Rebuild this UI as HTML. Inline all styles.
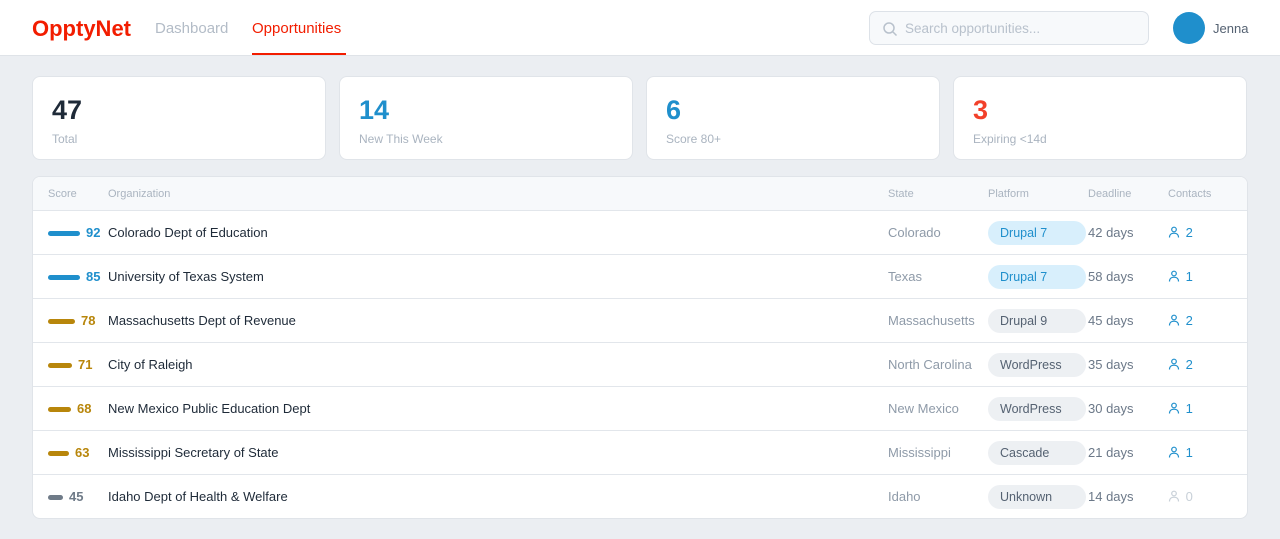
<!DOCTYPE html>
<html><head><meta charset="utf-8"><style>
*{box-sizing:border-box;margin:0;padding:0}
body{width:1280px;height:539px;background:#ebeef2;font-family:"Liberation Sans",sans-serif;position:relative;overflow:hidden}
.hdr{position:absolute;left:0;top:0;width:1280px;height:56px;background:#fff;border-bottom:1px solid #dfe3e8}
.logo{position:absolute;left:32px;top:16px;font-size:22px;font-weight:bold;color:#f21d00}
.nav{position:absolute;top:20px;font-size:15px}
.search{position:absolute;left:869px;top:11px;width:280px;height:34px;border:1px solid #dde2e8;border-radius:7px;background:#f7f9fb}
.search span{position:absolute;left:35px;top:9px;font-size:13.5px;color:#b8c1cc}
.av{position:absolute;left:1173px;top:12px;width:32px;height:32px;border-radius:50%;background:#1f8fcc}
.card{position:absolute;top:76px;width:294px;height:84px;background:#fff;border:1px solid #e0e4e9;border-radius:8px}
.card b{position:absolute;left:19px;top:18px;font-size:27px;font-weight:bold}
.card span{position:absolute;left:19px;top:55px;font-size:12px;color:#aab4c0}
.tbl{position:absolute;left:32px;top:176px;width:1216px;height:343px;background:#fff;border:1px solid #e0e4e9;border-radius:8px;overflow:hidden}
.th{height:34px;background:#f7f9fb;border-bottom:1px solid #e2e6eb;position:relative;font-size:11px;color:#aab4c0}
.th span{position:absolute;top:11px}
.row{height:44px;border-bottom:1px solid #e2e6eb;position:relative;font-size:13px}
.row:last-child{border-bottom:none}
.row>*{position:absolute}
.bar{left:15px;top:20px;height:5px;border-radius:3px}
.num{top:14px;font-weight:bold}
.org{left:75px;top:14px;color:#1e2a38}
.st{left:855px;top:14px;color:#8e9aa8}
.pill{left:955px;top:10px;width:98px;height:24px;border-radius:12px;padding:5px 0 0 12px;font-size:12.5px}
.dl{left:1055px;top:14px;color:#6b7888}
.ct{left:1135px;top:14px}
.ct svg{vertical-align:-1px;margin-right:2px}
</style></head><body>
<div class="hdr">
<div class="logo">OpptyNet</div>
<div class="nav" style="left:155px;color:#b3bcc7">Dashboard</div>
<div class="nav" style="left:252px;color:#f21d00">Opportunities</div>
<div style="position:absolute;left:252px;top:53px;width:94px;height:2px;background:#f21d00"></div>
<div class="search"><svg width="16" height="16" style="position:absolute;left:12px;top:9px" viewBox="0 0 16 16" fill="none" stroke="#b8c1cc" stroke-width="1.5"><circle cx="7" cy="7" r="5"/><path d="M11 11l3.5 3.5"/></svg><span>Search opportunities...</span></div>
<div class="av"></div>
<div style="position:absolute;left:1213px;top:21px;font-size:13px;color:#556272">Jenna</div>
</div>
<div class="card" style="left:32px"><b style="color:#1e2a38">47</b><span>Total</span></div>
<div class="card" style="left:339px"><b style="color:#1f8fcc">14</b><span>New This Week</span></div>
<div class="card" style="left:646px"><b style="color:#1f8fcc">6</b><span>Score 80+</span></div>
<div class="card" style="left:953px"><b style="color:#f2402a">3</b><span>Expiring &lt;14d</span></div>
<div class="tbl">
<div class="th"><span style="left:15px">Score</span><span style="left:75px">Organization</span><span style="left:855px">State</span><span style="left:955px">Platform</span><span style="left:1055px">Deadline</span><span style="left:1135px">Contacts</span></div>
<div class="row"><div class="bar" style="width:32px;background:#1f8fcc"></div><div class="num" style="left:53px;color:#1f8fcc">92</div><div class="org">Colorado Dept of Education</div><div class="st">Colorado</div><div class="pill" style="background:#d8effc;color:#1f8fcc">Drupal 7</div><div class="dl">42 days</div><div class="ct" style="color:#1f8fcc"><svg width="12" height="12" viewBox="0 0 12 12" fill="none" stroke="currentColor" stroke-width="1.2"><circle cx="6" cy="3.5" r="2.3"/><path d="M1.5 11.5c0-3 2-4.3 4.5-4.3s4.5 1.3 4.5 4.3"/></svg> 2</div></div>
<div class="row"><div class="bar" style="width:32px;background:#1f8fcc"></div><div class="num" style="left:53px;color:#1f8fcc">85</div><div class="org">University of Texas System</div><div class="st">Texas</div><div class="pill" style="background:#d8effc;color:#1f8fcc">Drupal 7</div><div class="dl">58 days</div><div class="ct" style="color:#1f8fcc"><svg width="12" height="12" viewBox="0 0 12 12" fill="none" stroke="currentColor" stroke-width="1.2"><circle cx="6" cy="3.5" r="2.3"/><path d="M1.5 11.5c0-3 2-4.3 4.5-4.3s4.5 1.3 4.5 4.3"/></svg> 1</div></div>
<div class="row"><div class="bar" style="width:27px;background:#b8860b"></div><div class="num" style="left:48px;color:#b8860b">78</div><div class="org">Massachusetts Dept of Revenue</div><div class="st">Massachusetts</div><div class="pill" style="background:#edf0f3;color:#556272">Drupal 9</div><div class="dl">45 days</div><div class="ct" style="color:#1f8fcc"><svg width="12" height="12" viewBox="0 0 12 12" fill="none" stroke="currentColor" stroke-width="1.2"><circle cx="6" cy="3.5" r="2.3"/><path d="M1.5 11.5c0-3 2-4.3 4.5-4.3s4.5 1.3 4.5 4.3"/></svg> 2</div></div>
<div class="row"><div class="bar" style="width:24px;background:#b8860b"></div><div class="num" style="left:45px;color:#b8860b">71</div><div class="org">City of Raleigh</div><div class="st">North Carolina</div><div class="pill" style="background:#edf0f3;color:#556272">WordPress</div><div class="dl">35 days</div><div class="ct" style="color:#1f8fcc"><svg width="12" height="12" viewBox="0 0 12 12" fill="none" stroke="currentColor" stroke-width="1.2"><circle cx="6" cy="3.5" r="2.3"/><path d="M1.5 11.5c0-3 2-4.3 4.5-4.3s4.5 1.3 4.5 4.3"/></svg> 2</div></div>
<div class="row"><div class="bar" style="width:23px;background:#b8860b"></div><div class="num" style="left:44px;color:#b8860b">68</div><div class="org">New Mexico Public Education Dept</div><div class="st">New Mexico</div><div class="pill" style="background:#edf0f3;color:#556272">WordPress</div><div class="dl">30 days</div><div class="ct" style="color:#1f8fcc"><svg width="12" height="12" viewBox="0 0 12 12" fill="none" stroke="currentColor" stroke-width="1.2"><circle cx="6" cy="3.5" r="2.3"/><path d="M1.5 11.5c0-3 2-4.3 4.5-4.3s4.5 1.3 4.5 4.3"/></svg> 1</div></div>
<div class="row"><div class="bar" style="width:21px;background:#b8860b"></div><div class="num" style="left:42px;color:#b8860b">63</div><div class="org">Mississippi Secretary of State</div><div class="st">Mississippi</div><div class="pill" style="background:#edf0f3;color:#556272">Cascade</div><div class="dl">21 days</div><div class="ct" style="color:#1f8fcc"><svg width="12" height="12" viewBox="0 0 12 12" fill="none" stroke="currentColor" stroke-width="1.2"><circle cx="6" cy="3.5" r="2.3"/><path d="M1.5 11.5c0-3 2-4.3 4.5-4.3s4.5 1.3 4.5 4.3"/></svg> 1</div></div>
<div class="row"><div class="bar" style="width:15px;background:#6f7b88"></div><div class="num" style="left:36px;color:#6f7b88">45</div><div class="org">Idaho Dept of Health &amp; Welfare</div><div class="st">Idaho</div><div class="pill" style="background:#edf0f3;color:#556272">Unknown</div><div class="dl">14 days</div><div class="ct" style="color:#c8d0d8"><svg width="12" height="12" viewBox="0 0 12 12" fill="none" stroke="currentColor" stroke-width="1.2"><circle cx="6" cy="3.5" r="2.3"/><path d="M1.5 11.5c0-3 2-4.3 4.5-4.3s4.5 1.3 4.5 4.3"/></svg> 0</div></div>
</div>
</body></html>
